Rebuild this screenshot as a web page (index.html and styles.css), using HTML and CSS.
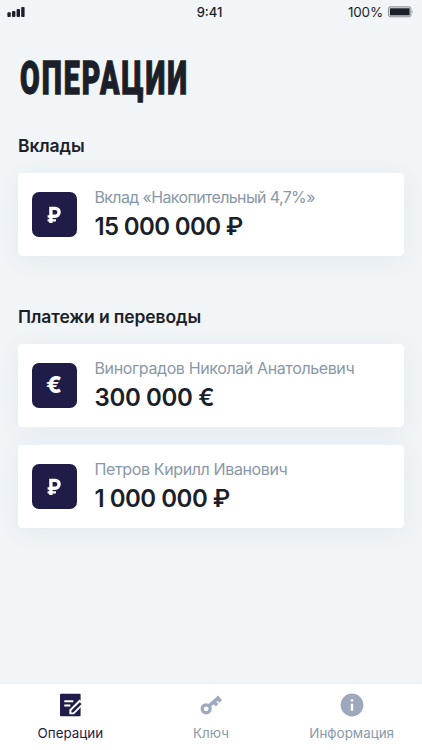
FILE: index.html
```html
<!DOCTYPE html>
<html lang="ru">
<head>
<meta charset="utf-8">
<title>Операции</title>
<link rel="stylesheet" href="styles.css">
</head>
<body>
<div class="screen">
  <header class="status">
    <svg class="signal" width="18" height="12" viewBox="0 0 18 12"><rect x=".4" y="6.3" width="3.4" height="4.7" rx="1"/><rect x="5" y="5" width="3.4" height="6" rx="1"/><rect x="9.6" y="3" width="3.4" height="8" rx="1"/><rect x="14.2" y="1" width="3.4" height="10" rx="1"/></svg>
    <span class="time">9:41</span>
    <span class="power"><span class="percent">100%</span>
      <svg width="26" height="12" viewBox="0 0 26 12"><rect x=".5" y=".8" width="22.4" height="10" rx="1.6" fill="#d0d3d8" stroke="#90939a"/><rect x="2" y="2.3" width="19.6" height="7" fill="#1b202b"/><path d="M24.2 4.2q1.3 1.6 0 3.2z" fill="#70747d"/></svg>
    </span>
  </header>
  <main class="content">
    <h1 class="title"><span>ОПЕРАЦИИ</span></h1>
    <section class="group">
      <h2 class="heading">Вклады</h2>
      <article class="card">
        <div class="tile"><svg viewBox="0 0 45 45"><path class="stem" d="M18.9 31V16.4H23.2a3.9 3.9 0 0 1 0 7.8H18.9"/><path class="bars" d="M15.6 24.5H20M15.6 28.4H24"/></svg></div>
        <div class="info"><p class="name n1">Вклад «Накопительный 4,7%»</p><p class="sum s1">15 000 000 ₽</p></div>
      </article>
    </section>
    <section class="group">
      <h2 class="heading">Платежи и переводы</h2>
      <article class="card">
        <div class="tile"><span class="euro">€</span></div>
        <div class="info"><p class="name n2">Виноградов Николай Анатольевич</p><p class="sum s2">300 000 €</p></div>
      </article>
      <article class="card">
        <div class="tile"><svg viewBox="0 0 45 45"><path class="stem" d="M18.9 31V16.4H23.2a3.9 3.9 0 0 1 0 7.8H18.9"/><path class="bars" d="M15.6 24.5H20M15.6 28.4H24"/></svg></div>
        <div class="info"><p class="name n3">Петров Кирилл Иванович</p><p class="sum s3">1 000 000 ₽</p></div>
      </article>
    </section>
  </main>
  <nav class="tabs">
    <a class="tab active">
      <svg width="24" height="24" viewBox="0 0 24 24"><rect x="2" y=".8" width="20.6" height="22.4" rx="1" fill="#1f1c47"/><path d="M6.3 8.2h9M6.3 12.4h6" stroke="#fff" stroke-width="2"/><path d="M11.4 21.3v-4.6L21.6 6.5l4.6 4.6L16 21.3z" fill="#fff"/><path d="M13.4 19.4v-1.8l8.4-8.4 1.8 1.8-8.4 8.4z" fill="#1f1c47"/></svg>
      <span>Операции</span>
    </a>
    <a class="tab">
      <svg width="24" height="24" viewBox="0 0 24 24"><circle cx="7.2" cy="15.8" r="4" fill="none" stroke="#9daac0" stroke-width="3.2"/><path d="M10 13 20.3 3.8M14.6 8.9l3.6 3.2M18.2 5.2l3.6 3.2" fill="none" stroke="#9daac0" stroke-width="3.6"/></svg>
      <span>Ключ</span>
    </a>
    <a class="tab">
      <svg width="24" height="24" viewBox="0 0 24 24"><circle cx="12" cy="12" r="11.4" fill="#9da8bc"/><path d="M12 6.2v2.4M12 10.7v7" stroke="#fff" stroke-width="2.4"/></svg>
      <span>Информация</span>
    </a>
  </nav>
</div>
</body>
</html>
```
FILE: styles.css
```css
* { box-sizing: border-box; }
body { margin: 0; font-family: Inter, "Liberation Sans", sans-serif; color: #1b1f29; background: #f1f5f8; }
h1, h2, p { margin: 0; white-space: nowrap; }
.screen { width: 422px; height: 750px; display: flex; flex-direction: column; overflow: hidden; }
.status { height: 24px; padding: 0 8px 0 7px; display: grid; grid-template-columns: 1fr auto 1fr; align-items: center; }
.signal { fill: #1b202b; }
.time { font-size: 13px; font-weight: 500; line-height: 24px; margin-right: 2px; }
.power { display: flex; justify-content: flex-end; align-items: center; gap: 5px; font-size: 13.5px; line-height: 24px; letter-spacing: -0.2px; }
.content { flex: 1; padding: 28px 18px 0; }
.title { height: 52px; line-height: 52px; font-family: Roboto, sans-serif; font-size: 46px; font-weight: 900; padding-left: 2px; }
.title span { display: inline-block; transform-origin: 0 50%; transform: scaleX(.62); letter-spacing: 3.3px; -webkit-text-stroke: 1.3px #1b1f29; }
.group { margin-bottom: 49px; }
.group:first-of-type { margin-top: 30px; }
.heading { height: 39px; line-height: 24px; font-size: 17.5px; font-weight: 600; letter-spacing: -0.1px; }
.card { height: 83px; display: flex; align-items: center; padding: 0 14px 0 13.5px; gap: 18px; background: #fff; border-radius: 4px; box-shadow: 0 4px 24px rgba(60, 90, 130, .07); }
.card + .card { margin-top: 18px; }
.tile { width: 45px; height: 45px; border-radius: 7px; background: #1f1c47; color: #fff; display: grid; place-items: center; }
.tile svg { width: 45px; height: 45px; fill: none; stroke: #fff; }
.stem { stroke-width: 3.4; }
.bars { stroke-width: 2.3; }
.euro { font-size: 23px; font-weight: 800; line-height: 45px; }
.info { height: 56px; }
.name { font-size: 16px; line-height: 21px; color: #8998a8; }
.n1 { letter-spacing: -0.64px; }
.n2 { letter-spacing: -0.38px; }
.n3 { letter-spacing: -0.37px; }
.sum { margin-top: 4px; font-size: 24px; line-height: 29px; font-weight: 600; letter-spacing: -0.5px; }
.s1 { letter-spacing: -0.64px; }
.s2 { letter-spacing: -0.35px; }
.tabs { height: 66px; background: #fff; box-shadow: 0 -1px 2px rgba(40, 60, 90, .04); display: flex; }
.tab { flex: 1; display: flex; flex-direction: column; align-items: center; padding-top: 9px; font-size: 13.4px; line-height: 20px; color: #8998a8; }
.tab svg { overflow: visible; }
.tab span { margin-top: 6px; }
.active { color: #1f1c47; }
```
